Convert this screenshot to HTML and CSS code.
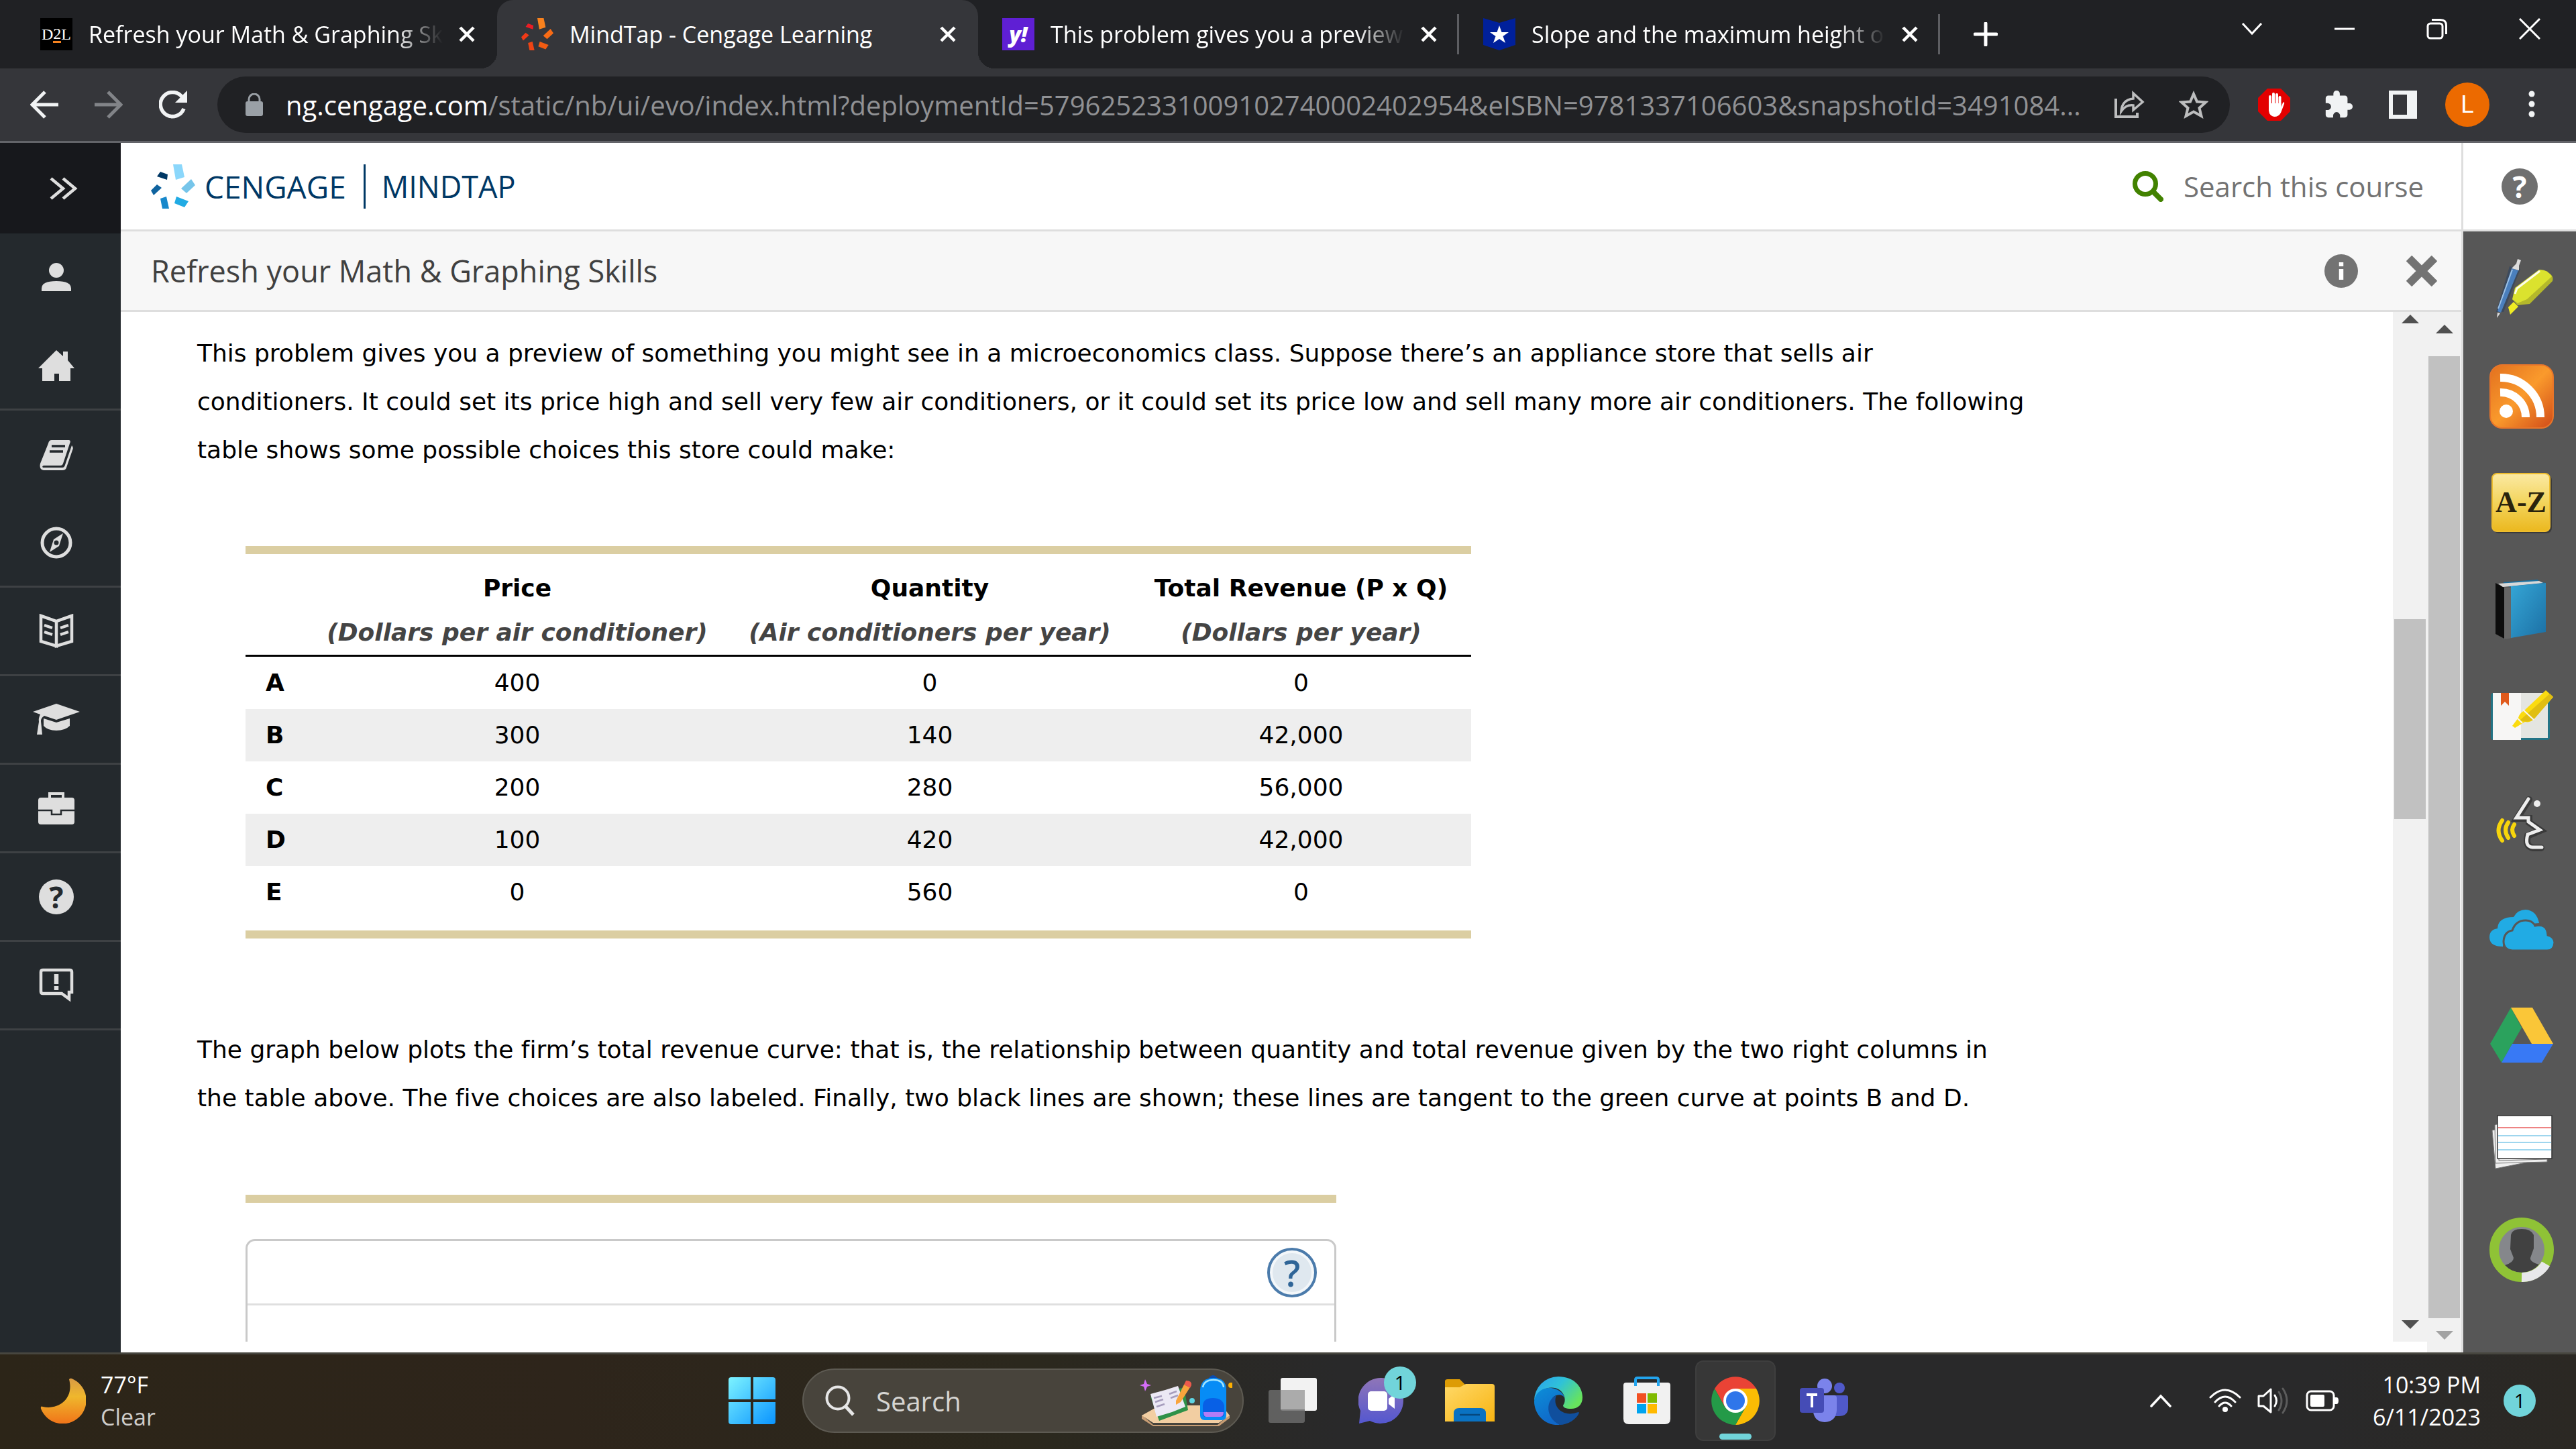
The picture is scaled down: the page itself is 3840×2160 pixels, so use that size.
FILE: index.html
```html
<!DOCTYPE html>
<html lang="en">
<head>
<meta charset="utf-8">
<title>MindTap - Cengage Learning</title>
<link rel="stylesheet" href="styles.css">
</head>
<body>
<header class="browser">
  <div class="tabstrip">
    <div class="tab">
      <span class="favicon favicon-d2l">D<i>2</i>L</span>
      <span class="tab-title tab-faded">Refresh your Math &amp; Graphing Sk</span>
      <button class="tab-close" aria-label="Close tab"><svg width="24" height="24" viewBox="0 0 24 24"><path d="M2 2 22 22M22 2 2 22" stroke="#fff" stroke-width="4.500"/></svg></button>
    </div>
    <div class="tab tab-active">
      <span class="favicon"><svg width="48" height="48" viewBox="0 0 66 66"><path fill="#f8821e" d="M33 0H46L50 19 37 23Z"/><path fill="#ea1d25" d="M14 11 25 15 24 23 9 18Z"/><path fill="#f13a17" d="M9 30 16 35 4 46 0 39Z"/><path fill="#ef4414" d="M14 51 23 48 27 66H17Z"/><path fill="#f25c12" d="M38 48 56 55 50 64 35 58Z"/><path fill="#f76b15" d="M60 22 66 31 53 43 45 36Z"/></svg></span>
      <span class="tab-title">MindTap - Cengage Learning</span>
      <button class="tab-close" aria-label="Close tab"><svg width="24" height="24" viewBox="0 0 24 24"><path d="M2 2 22 22M22 2 2 22" stroke="#fff" stroke-width="4.500"/></svg></button>
    </div>
    <div class="tab tab-divided">
      <span class="favicon favicon-yahoo">y!</span>
      <span class="tab-title tab-faded">This problem gives you a preview</span>
      <button class="tab-close" aria-label="Close tab"><svg width="24" height="24" viewBox="0 0 24 24"><path d="M2 2 22 22M22 2 2 22" stroke="#fff" stroke-width="4.500"/></svg></button>
    </div>
    <div class="tab tab-divided">
      <span class="favicon"><svg width="48" height="48" viewBox="0 0 48 48"><path fill="#00209b" d="M0 0 24 7 48 0V40L24 48 0 40Z"/><path fill="#fff" d="M24 11 27.500 21H38L29.500 27 33 37 24 31 15 37 18.500 27 10 21H20.500Z"/></svg></span>
      <span class="tab-title tab-faded">Slope and the maximum height o</span>
      <button class="tab-close" aria-label="Close tab"><svg width="24" height="24" viewBox="0 0 24 24"><path d="M2 2 22 22M22 2 2 22" stroke="#fff" stroke-width="4.500"/></svg></button>
    </div>
    <button class="new-tab" aria-label="New tab"><svg width="36" height="36" viewBox="0 0 36 36"><path d="M18 2V34M2 18H34" stroke="#fff" stroke-width="5" stroke-linecap="round"/></svg></button>
    <div class="window-controls">
      <button aria-label="Search tabs"><svg width="32" height="20" viewBox="0 0 32 20"><path d="M2 2 16 17 30 2" fill="none" stroke="#fff" stroke-width="3"/></svg></button>
      <button aria-label="Minimize"><svg width="30" height="30" viewBox="0 0 30 30"><path d="M0 15H30" stroke="#fff" stroke-width="3"/></svg></button>
      <button aria-label="Restore"><svg width="32" height="32" viewBox="0 0 32 32"><g fill="none" stroke="#fff" stroke-width="3"><rect x="2" y="8" width="22" height="22" rx="4"/><path d="M8 2.500H21Q29.500 2.500 29.500 11V24"/></g></svg></button>
      <button aria-label="Close"><svg width="32" height="32" viewBox="0 0 32 32"><path d="M1 1 31 31M31 1 1 31" stroke="#fff" stroke-width="3"/></svg></button>
    </div>
  </div>
  <div class="toolbar">
    <button class="tool" aria-label="Back"><svg width="42" height="42" viewBox="0 0 42 42"><path d="M42 21H4M22 2 3 21 22 40" fill="none" stroke="#f1f3f4" stroke-width="5"/></svg></button>
    <button class="tool" aria-label="Forward"><svg width="42" height="42" viewBox="0 0 42 42"><path d="M0 21H38M20 2 39 21 20 40" fill="none" stroke="#828488" stroke-width="5"/></svg></button>
    <button class="tool" aria-label="Reload"><svg width="42" height="42" viewBox="0 0 42 42"><path d="M37 27A18 18 0 1 1 34 9" fill="none" stroke="#f1f3f4" stroke-width="5.500"/><path d="M42 0V18H24Z" fill="#f1f3f4"/></svg></button>
    <div class="omnibox">
      <svg class="lock" width="26" height="34" viewBox="0 0 26 34"><rect y="12" width="26" height="22" rx="3" fill="#9aa0a6"/><path d="M5 13V9a8 8 0 0 1 16 0V13" fill="none" stroke="#9aa0a6" stroke-width="3"/></svg>
      <span class="url"><b>ng.cengage.com</b>/static/nb/ui/evo/index.html?deploymentId=5796252331009102740002402954&amp;eISBN=9781337106603&amp;snapshotId=3491084...</span>
      <button class="omni-button" aria-label="Share"><svg width="46" height="42" viewBox="0 0 46 42"><path d="M3 12V39H35V33" fill="none" stroke="#bdbebf" stroke-width="4"/><path d="M11 31C12 18 19 13 29 12V4L43 17 29 29V22C20 21 15 25 11 31Z" fill="none" stroke="#bdbebf" stroke-width="3.500"/></svg></button>
      <button class="omni-button" aria-label="Bookmark this tab"><svg width="44" height="42" viewBox="0 0 44 42"><path d="M22 5 27 16.500 40 17.500 30.500 26 33.500 38 22 31.500 10.500 38 13.500 26 4 17.500 17 16.500Z" fill="none" stroke="#bdbebf" stroke-width="4"/></svg></button>
    </div>
    <button class="tool tool-first" aria-label="Ad blocker"><svg width="48" height="48" viewBox="0 0 48 48"><path fill="#e30000" d="M14 0H34L48 14V34L34 48H14L0 34V14Z"/><path d="M18 27V12M23 25V8M28 25V9M32.500 27V13" stroke="#fff" stroke-width="4" stroke-linecap="round"/><path fill="#fff" d="M16 22H34.500V28L37 21Q40 19 39 23L34 36Q31 42 24 42 17 41 16 33Z"/></svg></button>
    <button class="tool" aria-label="Extensions"><svg width="46" height="46" viewBox="0 0 24 24"><path fill="#f1f3f4" d="M20.500 11H19V7c0-1.100-.900-2-2-2h-4V3.500a2.500 2.500 0 0 0-5 0V5H4c-1.100 0-2 .900-2 2v3.800h1.500a2.700 2.700 0 0 1 0 5.400H2V20c0 1.100.900 2 2 2h3.800v-1.500a2.700 2.700 0 0 1 5.400 0V22H17c1.100 0 2-.900 2-2v-4h1.500a2.500 2.500 0 0 0 0-5z"/></svg></button>
    <button class="tool" aria-label="Side panel"><svg width="42" height="42" viewBox="0 0 42 42"><path fill="#f1f3f4" fill-rule="evenodd" d="M0 0H42V42H0ZM6 6V36H27V6Z"/></svg></button>
    <button class="tool" aria-label="Profile"><span class="avatar">L</span></button>
    <button class="tool" aria-label="Menu"><svg width="10" height="42" viewBox="0 0 10 42"><g fill="#f1f3f4"><circle cx="5" cy="5" r="4.500"/><circle cx="5" cy="20" r="4.500"/><circle cx="5" cy="35" r="4.500"/></g></svg></button>
  </div>
</header>

<div class="page">
  <nav class="side" aria-label="Course">
    <button class="side-expand" aria-label="Expand"><svg width="42" height="34" viewBox="0 0 42 34"><path d="M2 2 20 17 2 32M20 2 38 17 20 32" fill="none" stroke="#dedede" stroke-width="4.500"/></svg></button>
    <button class="side-item" aria-label="Profile"><svg width="44" height="44" viewBox="0 0 44 44"><g fill="#dedede"><circle cx="22" cy="11" r="11"/><path d="M0 42V38Q0 27 22 27T44 38V42Z"/></g></svg></button>
    <button class="side-item side-end" aria-label="Home"><svg width="54" height="46" viewBox="0 0 54 46"><path fill="#dedede" d="M27 0 37 9V2H44V15L54 27H48V46H31V35H24V46H6V27H0Z"/></svg></button>
    <button class="side-item" aria-label="Book"><svg width="50" height="48" viewBox="0 0 50 48"><path fill="#dedede" d="M18 2H44Q47 3 45 7L35 37Q34 40 31 40H6Q3 41 5 43H34Q37 43 38 39L48 10Q51 13 49 17L40 43Q39 47 34 47H6Q-1 46 1 37L13 7Q14 2 18 2Z"/><path d="M18 11H38M15 19H35" stroke="#24292d" stroke-width="3.500"/></svg></button>
    <button class="side-item side-end" aria-label="Explore"><svg width="48" height="48" viewBox="0 0 48 48"><circle cx="24" cy="24" r="21" fill="none" stroke="#dedede" stroke-width="5"/><path fill="#dedede" d="M34 10 28 29 14 38 20 19Z"/><circle cx="24" cy="24" r="3.500" fill="#24292d"/></svg></button>
    <button class="side-item side-end" aria-label="Reader"><svg width="52" height="52" viewBox="0 0 52 52"><g fill="none" stroke="#dedede"><path stroke-width="4.500" d="M3 3 26 11V48L3 41ZM49 3 26 11V48L49 41Z"/><path stroke-width="4" d="M8 17 20 21M8 27 20 31M44 17 32 21M44 27 32 31M26 10V50"/></g></svg></button>
    <button class="side-item side-end" aria-label="Grades"><svg width="70" height="48" viewBox="0 0 70 48"><g fill="#dedede"><path d="M35 0 70 12 35 24 17 18Q12 21 12 26L14 46H6L9 27Q8 22 11 16L0 12Z"/><path d="M16 22 35 28 55 22V33Q48 40 35 40 22 40 16 33Z"/></g></svg></button>
    <button class="side-item side-end" aria-label="Toolbox"><svg width="54" height="50" viewBox="0 0 54 50"><path d="M17 10V3H37V10" fill="none" stroke="#dedede" stroke-width="4"/><rect y="9" width="54" height="40" rx="4" fill="#dedede"/><path d="M0 28H20V34H34V28H54" fill="none" stroke="#24292d" stroke-width="2.500"/></svg></button>
    <button class="side-item side-end" aria-label="Help"><span class="disc disc-light">?</span></button>
    <button class="side-item side-end" aria-label="Feedback"><svg width="52" height="52" viewBox="0 0 52 52"><path d="M6 3H46Q49 3 49 6V36H45V46L34 38H6Q3 38 3 35V6Q3 3 6 3Z" fill="none" stroke="#dedede" stroke-width="4.500"/><path d="M26 9V24M26 27V33" stroke="#dedede" stroke-width="6.500"/></svg></button>
  </nav>

  <div class="main">
    <div class="brandbar">
      <a class="brand" href="#" aria-label="Cengage MindTap">
        <svg width="66" height="66" viewBox="0 0 66 66"><path fill="#8bd7fb" d="M33 0H46L50 19 37 23Z"/><path fill="#003865" d="M14 11 25 15 24 23 9 18Z"/><path fill="#0f639f" d="M9 30 16 35 4 46 0 39Z"/><path fill="#1788cb" d="M14 51 23 48 27 66H17Z"/><path fill="#21abe4" d="M38 48 56 55 50 64 35 58Z"/><path fill="#76c5ea" d="M60 22 66 31 53 43 45 36Z"/></svg>
        <span class="brand-name">CENGAGE</span>
        <span class="brand-product">MINDTAP</span>
      </a>
      <label class="course-search">
        <svg width="46" height="46" viewBox="0 0 46 46"><circle cx="19" cy="19" r="15.500" fill="none" stroke="#428200" stroke-width="7"/><path d="M31 31 42 42" stroke="#428200" stroke-width="8" stroke-linecap="round"/></svg>
        <input type="text" placeholder="Search this course" aria-label="Search this course">
      </label>
    </div>
    <div class="titlebar">
      <h1>Refresh your Math &amp; Graphing Skills</h1>
      <button aria-label="Information"><svg width="50" height="50" viewBox="0 0 50 50"><circle cx="25" cy="25" r="25" fill="#737373"/><path d="M25 12V18M25 22V38" stroke="#fff" stroke-width="6.500"/></svg></button>
      <button aria-label="Close"><svg width="46" height="46" viewBox="0 0 46 46"><path d="M4 4 42 42M42 4 4 42" stroke="#737373" stroke-width="12"/></svg></button>
    </div>
    <div class="reader">
      <div class="frame">
        <article>
          <p>This problem gives you a preview of something you might see in a microeconomics class. Suppose there’s an appliance store that sells air<br>conditioners. It could set its price high and sell very few air conditioners, or it could set its price low and sell many more air conditioners. The following<br>table shows some possible choices this store could make:</p>
          <table>
            <colgroup><col class="col-key"><col class="col-price"><col class="col-quantity"><col></colgroup>
            <thead>
              <tr><td></td><th scope="col">Price<em>(Dollars per air conditioner)</em></th><th scope="col">Quantity<em>(Air conditioners per year)</em></th><th scope="col">Total Revenue (P x Q)<em>(Dollars per year)</em></th></tr>
            </thead>
            <tbody>
              <tr><th scope="row">A</th><td>400</td><td>0</td><td>0</td></tr>
              <tr><th scope="row">B</th><td>300</td><td>140</td><td>42,000</td></tr>
              <tr><th scope="row">C</th><td>200</td><td>280</td><td>56,000</td></tr>
              <tr><th scope="row">D</th><td>100</td><td>420</td><td>42,000</td></tr>
              <tr class="last"><th scope="row">E</th><td>0</td><td>560</td><td>0</td></tr>
            </tbody>
          </table>
          <p>The graph below plots the firm’s total revenue curve: that is, the relationship between quantity and total revenue given by the two right columns in<br>the table above. The five choices are also labeled. Finally, two black lines are shown; these lines are tangent to the green curve at points B and D.</p>
          <section class="graph">
            <div class="graph-box">
              <div class="graph-head"><button class="graph-help" aria-label="Help">?</button></div>
            </div>
          </section>
        </article>
        <div class="scroll scroll-inner"><i class="arrow-up"></i><b></b><i class="arrow-down"></i></div>
      </div>
      <div class="scroll scroll-outer"><i class="arrow-up"></i><b></b><i class="arrow-down arrow-off"></i></div>
    </div>
  </div>

  <aside class="rail">
    <div class="rail-help"><button aria-label="Help"><span class="disc disc-dark">?</span></button></div>
    <div class="rail-tools">
      <button aria-label="Highlights"><svg width="96" height="96" viewBox="0 0 96 96"><path fill="#3d4a5c" d="M10 81 30 13 46 17 21 81Z"/><path fill="#4a7fbd" d="M12 80 33 16 43 19 17 82Z"/><path d="M13 76 34 18" stroke="#9cc1e6" stroke-width="2"/><path fill="#ddd" d="M33 16 40 9 42 2 47 4 44 12 44 19ZM12 82 16 83 11 90Z"/><path fill="#b4b82b" d="M34 62 42 71 60 69 94 35Q96 28 90 24L52 50Z"/><path fill="#dbe22e" d="M34 62 38 45 74 18Q86 17 93 28L56 62 42 68Z"/><path d="M38 54 41 46 75 20" fill="none" stroke="#fdfdee" stroke-width="3"/><path fill="#f0ec24" d="M28 74 36 66 43 73 31 85Z"/></svg></button>
      <button aria-label="Feeds"><svg width="96" height="96" viewBox="0 0 96 96"><defs><linearGradient id="rss" x2="1" y2="1"><stop stop-color="#e2701f"/><stop offset=".5" stop-color="#fa9a2c"/><stop offset="1" stop-color="#d04a18"/></linearGradient></defs><rect x="1" y="1" width="94" height="94" rx="18" fill="url(#rss)" stroke="#e8752a" stroke-width="2"/><circle cx="25" cy="70" r="10" fill="#fff"/><path d="M16 42A37 37 0 0 1 54 79M16 20A59 59 0 0 1 76 79" fill="none" stroke="#fff" stroke-width="12"/></svg></button>
      <button aria-label="Glossary"><svg width="96" height="96" viewBox="0 0 96 96"><defs><linearGradient id="az" x2="0" y2="1"><stop stop-color="#fbeaa4"/><stop offset=".5" stop-color="#f3d45c"/><stop offset="1" stop-color="#ebb81f"/></linearGradient></defs><rect x="6" y="6" width="87" height="87" rx="8" fill="#3a3a3a"/><rect x="4" y="4" width="86" height="86" rx="7" fill="url(#az)" stroke="#eebd2e" stroke-width="2"/><text x="47" y="61" text-anchor="middle" font-family="Liberation Serif, serif" font-weight="bold" font-size="44" fill="#2a230c">A-Z</text></svg></button>
      <button aria-label="Dictionary"><svg width="96" height="96" viewBox="0 0 96 96"><defs><linearGradient id="bk" x2="1" y2="1"><stop stop-color="#35a6d6"/><stop offset="1" stop-color="#1c70a5"/></linearGradient></defs><path fill="#0d0d0d" d="M9 8 24 16V92L9 84Z"/><path fill="#666" d="M22 15H34V90L22 92Z"/><path fill="#1a6f9f" d="M20 7 72 3 74 6 84 8 30 14Z"/><path fill="#d8d8d8" d="M13 9 74 5 80 8 20 14Z"/><path fill="url(#bk)" d="M32 13 84 8V81L32 90Z"/></svg></button>
      <button aria-label="Notebook"><svg width="96" height="96" viewBox="0 0 96 96"><rect x="2" y="13" width="88" height="70" rx="4" fill="#237385"/><path fill="#f7f6f5" d="M5 13H47V83H5Z"/><path fill="#e4e5e1" d="M47 13H87V80H47Z"/><path fill="#e05a1c" d="M17 13H29V32L23 26 17 32Z"/><path fill="#fbdb10" d="M34 62 43 50Q44 44 52 39L84 9 95 19 68 50Q62 58 53 56L38 65Z"/><path fill="#e0be12" d="M45 54 90 14 95 19 68 50Q60 59 45 54Z"/><path d="M50 38 66 53M42 51 49 58" stroke="#f7f6f5" stroke-width="2"/></svg></button>
      <button aria-label="Read aloud"><svg width="96" height="96" viewBox="0 0 96 96"><g fill="none" stroke-linecap="round"><path d="M59 13 41 41H59V47L76 59 57 67Q53 83 65 85H77" stroke="#3a3a3a" stroke-width="10"/><path d="M58 12 40 40H58V46L75 58 57 65Q52 83 64 84H78" stroke="#eee" stroke-width="5"/><path d="M19 44Q8 59 19 74M28 47Q20 58 28 70M37 50Q31 58 37 67" stroke="#f7d50c" stroke-width="6"/></g><circle cx="71" cy="19" r="5" fill="#eee"/></svg></button>
      <button aria-label="OneDrive"><svg width="96" height="96" viewBox="0 0 96 96"><g fill="#21abe4"><path d="M20 73Q0 73 0 59 0 48 12 46 13 29 36 29 42 18 54 18 70 19 74 38L50 40 33 50 21 62Z"/><path stroke="#575757" stroke-width="3" d="M34 79Q21 78 21 65 22 51 34 49 39 34 54 34 64 34 68 42 86 38 87 56 96 58 97 67 96 79 86 79Z"/></g></svg></button>
      <button aria-label="Google Drive"><svg width="96" height="96" viewBox="0 0 96 96"><path fill="#2ba25d" d="M32 5 48 35 18 87 1 59Z"/><path fill="#fac638" d="M32 5H64L95 59H63Z"/><path fill="#3879f5" d="M34 59H95L78 87H18Z"/></svg></button>
      <button aria-label="Flashcards"><svg width="96" height="96" viewBox="0 0 96 96"><g fill="#eee" stroke="#777"><path d="M4 29 12 27 90 70 9 86Z"/><path d="M8 21 14 19V74L86 72V76L9 78Z"/></g><rect x="12" y="7" width="81" height="64" fill="#fff" stroke="#333" stroke-width="1.500"/><path d="M13 25H92" stroke="#ee8484" stroke-width="2"/><path d="M13 37H92M13 47H92M13 58H92" stroke="#9fd6ee" stroke-width="2"/></svg></button>
      <button aria-label="Tutor"><svg width="96" height="96" viewBox="0 0 96 96"><circle cx="48" cy="48" r="36" fill="#85878b"/><path fill="#414141" d="M32 26Q34 17 48 17T66 26V46L61 60Q60 66 74 70 64 82 48 82 32 82 23 71 36 67 36 60L31 47Z"/><circle cx="48" cy="48" r="41" fill="none" stroke="#8fc236" stroke-width="14"/><path d="M48 89A41 41 0 0 0 84 69" fill="none" stroke="#e8e8ea" stroke-width="14"/></svg></button>
    </div>
  </aside>
</div>

<footer class="taskbar">
  <div class="weather">
    <svg width="68" height="68" viewBox="0 0 68 68"><defs><linearGradient id="moon" x2="0" y2="1"><stop stop-color="#d99a44"/><stop offset=".4" stop-color="#efb72d"/><stop offset="1" stop-color="#f07419"/></linearGradient></defs><path fill="url(#moon)" d="M43 2Q45 0 47 1A35 35 0 1 1 1 46Q0 41 4 43C26 48 51 32 43 2Z"/></svg>
    <div class="weather-text">77°F<span>Clear</span></div>
  </div>
  <div class="apps">
    <button class="app" aria-label="Start"><svg width="70" height="70" viewBox="0 0 70 70"><defs><linearGradient id="win" gradientUnits="userSpaceOnUse" x2="70" y2="70"><stop stop-color="#7df3ff"/><stop offset="1" stop-color="#0a94ff"/></linearGradient></defs><path fill="url(#win)" d="M4 0H33V33H0V4Q0 0 4 0ZM37 0H66Q70 0 70 4V33H37ZM0 37H33V70H4Q0 70 0 66ZM37 37H70V66Q70 70 66 70H37Z"/></svg></button>
    <label class="search-pill">
      <svg width="44" height="46" viewBox="0 0 44 46"><circle cx="19" cy="19" r="16.500" fill="none" stroke="#e6e6e6" stroke-width="4"/><path d="M31 32 42 44" stroke="#e6e6e6" stroke-width="5"/></svg>
      <input type="text" placeholder="Search" aria-label="Search">
      <svg width="138" height="76" viewBox="0 0 138 76"><path fill="#c79d74" d="M3 59 20 74H116L134 59V64L118 76H20L3 65Z"/><path fill="#f2cea2" d="M30 45H122L134 60 118 71H20L3 60Z"/><path fill="#2f9148" d="M16 32 66 18 72 52 29 68Z"/><path fill="#ece9f5" d="M16 28 38 22 48 55 25 62ZM38 22 57 16 68 47 48 55Z"/><path d="M21 34 33 31M23 40 35 36M25 47 37 43M44 28 55 24M46 34 57 30" stroke="#a69dbd" stroke-width="2.500"/><path fill="#f9a43c" d="M54 38 66 14 75 18 61 40 54 44Z"/><path fill="#ee5a4c" d="M69 8Q78 8 77 15L75 19 66 14Z"/><path fill="#d56df8" d="M8 6 11 13 17 15 11 17 8 24 6 17 0 15 6 13Z"/><path fill="none" stroke="#0b4cae" stroke-width="4" d="M103 8Q109-4 116 8"/><path fill="#078cf6" d="M90 22Q91 4 110 4T129 22V60Q129 67 122 67H97Q90 67 90 60Z"/><path fill="none" stroke="#a4e6ff" stroke-width="2.500" d="M94 18Q96 7 110 7T125 18"/><path fill="#0860e6" d="M94 45Q95 34 109 34T126 45V58Q126 62 121 62H99Q94 62 94 58Z"/><path fill="#b27cf6" d="M95 55H125Q125 62 120 62H99Q95 62 95 55Z"/><circle cx="136" cy="15" r="4" fill="#ffb000"/><circle cx="78" cy="38" r="4" fill="#5ed5e3"/></svg>
    </label>
    <button class="app" aria-label="Task view"><svg width="72" height="68" viewBox="0 0 72 68"><rect x="18" width="54" height="49" rx="3" fill="#f2f2f2"/><rect y="18" width="54" height="49" rx="3" fill="#6a6a6a" opacity=".85"/><path fill="#ababab" d="M18 18H54V47H18Z"/></svg></button>
    <button class="app" aria-label="Chat"><svg width="68" height="68" viewBox="0 0 68 68"><defs><linearGradient id="chat" x2="0" y2="1"><stop stop-color="#8f75b8"/><stop offset="1" stop-color="#5457cf"/></linearGradient></defs><path fill="url(#chat)" d="M34 0A34 34 0 1 1 17 64L1 68 3 49A34 34 0 0 1 34 0Z"/><rect x="14" y="20" width="29" height="29" rx="5" fill="#fff"/><path fill="#fff" d="M45 31 54 24V46L45 39Z"/></svg><span class="badge app-badge">1</span></button>
    <button class="app" aria-label="File Explorer"><svg width="74" height="66" viewBox="0 0 74 66"><defs><linearGradient id="fold" x2="1" y2="1"><stop stop-color="#ffd968"/><stop offset="1" stop-color="#f8b412"/></linearGradient></defs><path fill="#dd9c05" d="M0 14V4Q0 1 4 1H22L31 10V22H0Z"/><path fill="url(#fold)" d="M0 13H22L31 8H70Q74 8 74 12V64H0Z"/><path fill="#0a72c2" d="M13 64V52Q13 44 21 44H53Q61 44 61 52V64Z"/><path d="M22 54H52" stroke="#06487e" stroke-width="2.500"/></svg></button>
    <button class="app" aria-label="Microsoft Edge"><svg width="72" height="72" viewBox="0 0 72 72"><defs><linearGradient id="e1" x2="1" y2=".6"><stop stop-color="#2a9ff0"/><stop offset=".5" stop-color="#2fc2d8"/><stop offset="1" stop-color="#67e35d"/></linearGradient><linearGradient id="e2" x2=".5" y2="1"><stop stop-color="#0c8ed8"/><stop offset="1" stop-color="#1067c8"/></linearGradient></defs><path fill="url(#e1)" d="M0 36A36 36 0 0 1 36 0C58 0 72 14 72 31 72 42 65 48 55 48 47 48 43 46 43 43 48 37 46 26 38 20 26 12 6 18 0 36Z"/><path fill="url(#e2)" d="M0 37C2 22 14 17 23 17 37 17 45 27 45 32 44 28 38 26 33 28 20 32 22 58 38 72 16 74 0 56 0 37Z"/><path fill="#104f9d" d="M33 28C17 35 16 61 38 72 50 72 63 64 67 54 66 52 64 54 62 54 44 60 26 46 33 28Z"/></svg></button>
    <button class="app" aria-label="Microsoft Store"><svg width="72" height="72" viewBox="0 0 72 72"><path d="M19 18V5Q19 2 22 2H50Q53 2 53 5V18" fill="none" stroke="#22a4ee" stroke-width="4"/><path fill="#f1f1f1" d="M5 9H67Q71 9 71 13V63Q71 71 63 71H9Q1 71 1 63V13Q1 9 5 9Z"/><path d="M19 9V14M53 9V14" stroke="#22a4ee" stroke-width="4"/><path fill="#f25022" d="M21 25H35V39H21Z"/><path fill="#7fba00" d="M37 25H51V39H37Z"/><path fill="#00a4ef" d="M21 41H35V55H21Z"/><path fill="#ffb900" d="M37 41H51V55H37Z"/></svg></button>
    <button class="app app-active" aria-label="Google Chrome"><svg width="72" height="72" viewBox="0 0 72 72"><path fill="#ea4335" d="M5 18A36 36 0 0 1 67 18H36L20 45Z"/><path fill="#fbbc04" d="M67 18A36 36 0 0 1 36 72L52 44 36 18Z"/><path fill="#249a48" d="M36 72A36 36 0 0 1 5 18L20 45Q30 54 44 52L52 44Z"/><circle cx="36" cy="36" r="18" fill="#fff"/><circle cx="36" cy="36" r="14" fill="#2f76ea"/></svg></button>
    <button class="app" aria-label="Microsoft Teams"><svg width="72" height="66" viewBox="0 0 72 66"><circle cx="37" cy="11" r="11" fill="#7b83eb"/><circle cx="59" cy="14" r="8" fill="#5059c9"/><path fill="#5059c9" d="M50 25H69Q72 25 72 28V43Q72 56 58 56H50Z"/><path fill="#7b83eb" d="M20 25H51Q55 25 55 29V47Q54 64 37 65 22 64 20 50Z"/><rect y="14" width="36" height="37" rx="4" fill="#454cb6"/><path d="M10 24H26M18 24V43" stroke="#fff" stroke-width="4"/></svg></button>
  </div>
  <div class="tray">
    <svg class="caret" width="32" height="20" viewBox="0 0 32 20"><path d="M2 18 16 3 30 18" fill="none" stroke="#fff" stroke-width="3.500" stroke-linecap="round"/></svg>
    <svg width="48" height="36" viewBox="0 0 48 36"><g fill="none" stroke="#fff" stroke-width="3" stroke-linecap="round"><path d="M2 13Q24-9 46 13M9 20Q24 4 39 20M15 26Q24 16 33 26"/></g><circle cx="24" cy="31" r="4" fill="#fff"/></svg>
    <svg width="48" height="42" viewBox="0 0 48 42"><g fill="none" stroke-width="3" stroke-linecap="round" stroke-linejoin="round"><path stroke="#fff" d="M2 14H9L20 4V38L9 29H2ZM26 13Q31 21 26 29"/><path stroke="#5c5c5c" d="M32 8Q40 21 32 35M38 3Q50 21 38 39"/></g></svg>
    <svg width="50" height="32" viewBox="0 0 50 32"><rect x="2" y="2" width="40" height="28" rx="6" fill="none" stroke="#fff" stroke-width="3"/><rect x="7" y="7" width="21" height="18" rx="2" fill="#fff"/><path fill="#fff" d="M43 11H46Q49 11 49 16T46 21H43Z"/></svg>
    <time class="clock" datetime="2023-06-11T22:39">10:39 PM<br>6/11/2023</time>
    <span class="badge">1</span>
  </div>
</footer>
</body>
</html>
```
FILE: styles.css
```css
* { box-sizing: border-box; }

body {
  margin: 0;
  height: 100vh;
  display: flex;
  flex-direction: column;
  overflow: hidden;
  background: #fff;
  font-family: "Open Sans", "Noto Sans", sans-serif;
  font-size: 34px;
}

button {
  display: flex;
  align-items: center;
  justify-content: center;
  padding: 0;
  border: 0;
  background: none;
  font: inherit;
}

input {
  min-width: 0;
  padding: 0;
  border: 0;
  outline: 0;
  background: none;
  font: inherit;
}

svg { display: block; flex: none; }

/* Browser window */

.browser { background: #35363a; color: #fff; }

.tabstrip {
  display: flex;
  align-items: stretch;
  height: 102px;
  padding-left: 24px;
  background: #202124;
}

.tab {
  position: relative;
  display: flex;
  align-items: center;
  gap: 24px;
  width: 717px;
  padding: 0 33px 0 36px;
}

.tab-active { background: #35363a; border-radius: 24px 24px 0 0; }

.tab-active::before,
.tab-active::after {
  content: "";
  position: absolute;
  bottom: 0;
  width: 24px;
  height: 24px;
}

.tab-active::before { right: 100%; background: radial-gradient(circle at 0 0, #202124 24px, #35363a 24px); }
.tab-active::after { left: 100%; background: radial-gradient(circle at 100% 0, #202124 24px, #35363a 24px); }

.tab-divided { background: linear-gradient(#5d5e62, #5d5e62) right center / 3px 60px no-repeat; }

.favicon {
  flex: none;
  display: flex;
  align-items: center;
  justify-content: center;
  width: 48px;
  height: 48px;
}

.favicon-d2l { background: #000; font-family: "Liberation Serif", serif; font-size: 24px; }
.favicon-d2l i { font-style: normal; border-bottom: 3px solid #f58220; line-height: 22px; }
.favicon-yahoo { background: #5f1fd4; font-size: 32px; font-weight: 800; font-style: italic; line-height: 40px; }

.tab-title {
  flex: 1;
  min-width: 0;
  overflow: hidden;
  white-space: nowrap;
}

.tab-faded {
  -webkit-mask-image: linear-gradient(90deg, #000 calc(100% - 72px), transparent);
  mask-image: linear-gradient(90deg, #000 calc(100% - 72px), transparent);
}

.new-tab { width: 96px; margin-left: 20px; }

.window-controls { display: flex; height: 86px; margin-left: auto; }
.window-controls button { width: 138px; }

.toolbar {
  display: flex;
  align-items: center;
  height: 111px;
  padding: 0 18px;
  border-bottom: 3px solid #636469;
}

.tool { flex: none; width: 96px; height: 96px; }
.tool-first { margin-left: 18px; }

.omnibox {
  flex: 1;
  min-width: 0;
  display: flex;
  align-items: center;
  height: 84px;
  margin-left: 18px;
  padding: 0 30px 0 42px;
  border-radius: 42px;
  background: #202124;
}

.url {
  flex: 1;
  min-width: 0;
  margin-left: 34px;
  overflow: hidden;
  white-space: nowrap;
  color: #909194;
  font-size: 40px;
}

.url b { color: #fff; font-weight: 400; }
.omni-button { width: 48px; height: 84px; margin-left: 48px; }

.avatar {
  width: 66px;
  height: 66px;
  border-radius: 50%;
  background: #ec6a00;
  color: #fff;
  font-family: Roboto, sans-serif;
  font-size: 36px;
  line-height: 66px;
  text-align: center;
}

/* Page */

.page {
  flex: 1;
  min-height: 0;
  display: grid;
  grid-template-columns: 180px minmax(0, 1fr) 168px;
}

.side { background: #24292d; }
.side button { width: 100%; }
.side-expand { height: 135px; padding-left: 10px; background: #17181c; }
.side .side-item { height: 132px; padding-right: 12px; }
.side-end { border-bottom: 3px solid #3e4144; }

.disc { border-radius: 50%; font-weight: 700; text-align: center; }
.disc-light { width: 52px; height: 52px; background: #dedede; color: #24292d; font-size: 44px; line-height: 52px; }
.disc-dark { width: 54px; height: 54px; background: #6f6f6f; color: #fff; font-size: 44px; line-height: 54px; }

.main {
  display: flex;
  flex-direction: column;
  min-height: 0;
  border-right: 3px solid #dedede;
}

.brandbar {
  flex: none;
  display: flex;
  align-items: center;
  justify-content: space-between;
  height: 132px;
  padding: 0 48px 0 45px;
  border-bottom: 3px solid #dedede;
}

.brand { display: flex; align-items: center; color: #003865; text-decoration: none; font-weight: 500; }
.brand-name { margin-left: 14px; font-size: 46px; }
.brand-product { margin-left: 26px; padding-left: 24px; border-left: 3px solid #003865; font-size: 45px; line-height: 66px; }

.course-search { display: flex; align-items: center; gap: 30px; color: #737373; font-size: 42px; }
.course-search input { width: 366px; }
.course-search input::placeholder { color: #737373; opacity: 1; }

.titlebar {
  flex: none;
  display: flex;
  align-items: center;
  gap: 72px;
  height: 120px;
  padding: 0 36px 0 45px;
  border-bottom: 3px solid #dedede;
  background: #f7f7f7;
}

.titlebar h1 { flex: 1; margin: 0; color: #404040; font-size: 45px; font-weight: 400; }

.reader { flex: 1; min-height: 0; display: flex; }
.frame { flex: 1; min-width: 0; display: flex; margin-bottom: 16px; }

article {
  flex: 1;
  min-width: 0;
  overflow: hidden;
  padding: 26px 0 0 114px;
  color: #000;
  font-family: "DejaVu Sans", Verdana, sans-serif;
  font-size: 36px;
  font-variant-ligatures: none;
}

article p { margin: 0; line-height: 72px; white-space: nowrap; }

article table {
  table-layout: fixed;
  width: 1827px;
  margin: 107px 0 130px 72px;
  border-top: 12px solid #dbcea2;
  border-bottom: 12px solid #dbcea2;
  border-collapse: separate;
  border-spacing: 0;
}

.col-key { width: 90px; }
.col-price { width: 630px; }
.col-quantity { width: 600px; }

article th, article td { padding: 0; text-align: center; line-height: 78px; }
article thead th { padding-top: 18px; line-height: 66px; }
thead th, thead td { border-bottom: 3px solid #000; }
article tbody th { padding-left: 30px; text-align: left; }
thead em { display: block; color: #444; }
tbody tr:nth-child(even) { background: #eee; }
article .last th, article .last td { padding-bottom: 18px; }

.graph {
  width: 1626px;
  margin: 108px 0 0 72px;
  padding-top: 54px;
  border-top: 12px solid #dbcea2;
}

.graph-box { height: 240px; border: 3px solid #c9c9c9; border-radius: 14px; }
.graph-head {
  display: flex;
  align-items: center;
  justify-content: flex-end;
  height: 96px;
  padding-right: 26px;
  border-bottom: 3px solid #dfdfdf;
}

.graph-help {
  width: 74px;
  height: 74px;
  border: 4px solid #4b7bab;
  border-radius: 50%;
  background: #dfe8ef;
  box-shadow: inset 0 0 0 4px #f3f7fa;
  color: #2f6597;
  font-family: "Open Sans", sans-serif;
  font-size: 54px;
  font-weight: 600;
  line-height: 60px;
}

.scroll { flex: none; display: grid; width: 51px; padding: 0 2px; background: #f1f1f1; justify-items: center; align-items: center; }
.scroll b { width: 100%; height: 100%; background: #c1c1c1; }
.scroll-inner { grid-template-rows: 21px 437fr 298fr 728fr 51px; }
.scroll-inner b { grid-row: 3; }
.scroll-inner .arrow-down { grid-row: 5; }
.scroll-outer { grid-template-rows: 51px 15fr 1434fr 51px; }
.scroll-outer b { grid-row: 3; }
.scroll-outer .arrow-down { grid-row: 4; }

.arrow-up, .arrow-down { border: 13px solid transparent; border-top-width: 0; border-bottom-color: #505050; }
.arrow-down { border-top: 13px solid #505050; border-bottom: 0; }
.arrow-off { border-top-color: #a3a3a3; }

.rail { background: #575757; }
.rail-help {
  display: flex;
  align-items: center;
  justify-content: center;
  height: 132px;
  border-bottom: 3px solid #dedede;
  background: #fff;
}
.rail-tools { display: flex; flex-direction: column; align-items: center; gap: 63px; padding: 39px 0 0 6px; }

/* Taskbar */

.taskbar {
  flex: none;
  display: grid;
  grid-template-columns: 1fr auto 1fr;
  height: 144px;
  background: linear-gradient(90deg, #2c2518 0, #2e251b 22%, #2b281d 40%, #29292a 52%, #29292a 90%, #2b2823 100%);
  box-shadow: inset 0 3px #47463f;
  color: #fff;
}

.weather { display: flex; align-items: center; gap: 22px; padding-left: 60px; }
.weather-text, .clock { line-height: 48px; }
.weather-text span { display: block; color: #cfcdca; }

.apps { display: flex; align-items: center; }
.app { position: relative; width: 132px; height: 120px; }

.app-active {
  width: 120px;
  margin: 0 6px;
  border: 2px solid #3e3e3e;
  border-radius: 12px;
  background: #373737;
}

.app-active::after {
  content: "";
  position: absolute;
  bottom: 0;
  width: 48px;
  height: 9px;
  border-radius: 5px;
  background: #71d4da;
}

.search-pill {
  display: flex;
  align-items: center;
  width: 658px;
  height: 96px;
  margin: 0 7px 0 9px;
  padding: 0 15px 0 32px;
  border: 2px solid #5d5a52;
  border-radius: 48px;
  background: #48443c;
  font-size: 40px;
}

.search-pill input { flex: 1; margin-left: 32px; }
.search-pill input::placeholder { color: #d6d5d2; opacity: 1; }

.badge {
  width: 48px;
  height: 48px;
  border-radius: 50%;
  background: #71d4da;
  color: #000;
  font-size: 30px;
  line-height: 48px;
  text-align: center;
}

.app-badge { position: absolute; top: 9px; right: 14px; }

.tray { display: flex; align-items: center; justify-content: flex-end; gap: 24px; padding-right: 60px; }
.caret { margin-right: 32px; }
.clock { margin: 0 10px 0 26px; text-align: right; }
```
